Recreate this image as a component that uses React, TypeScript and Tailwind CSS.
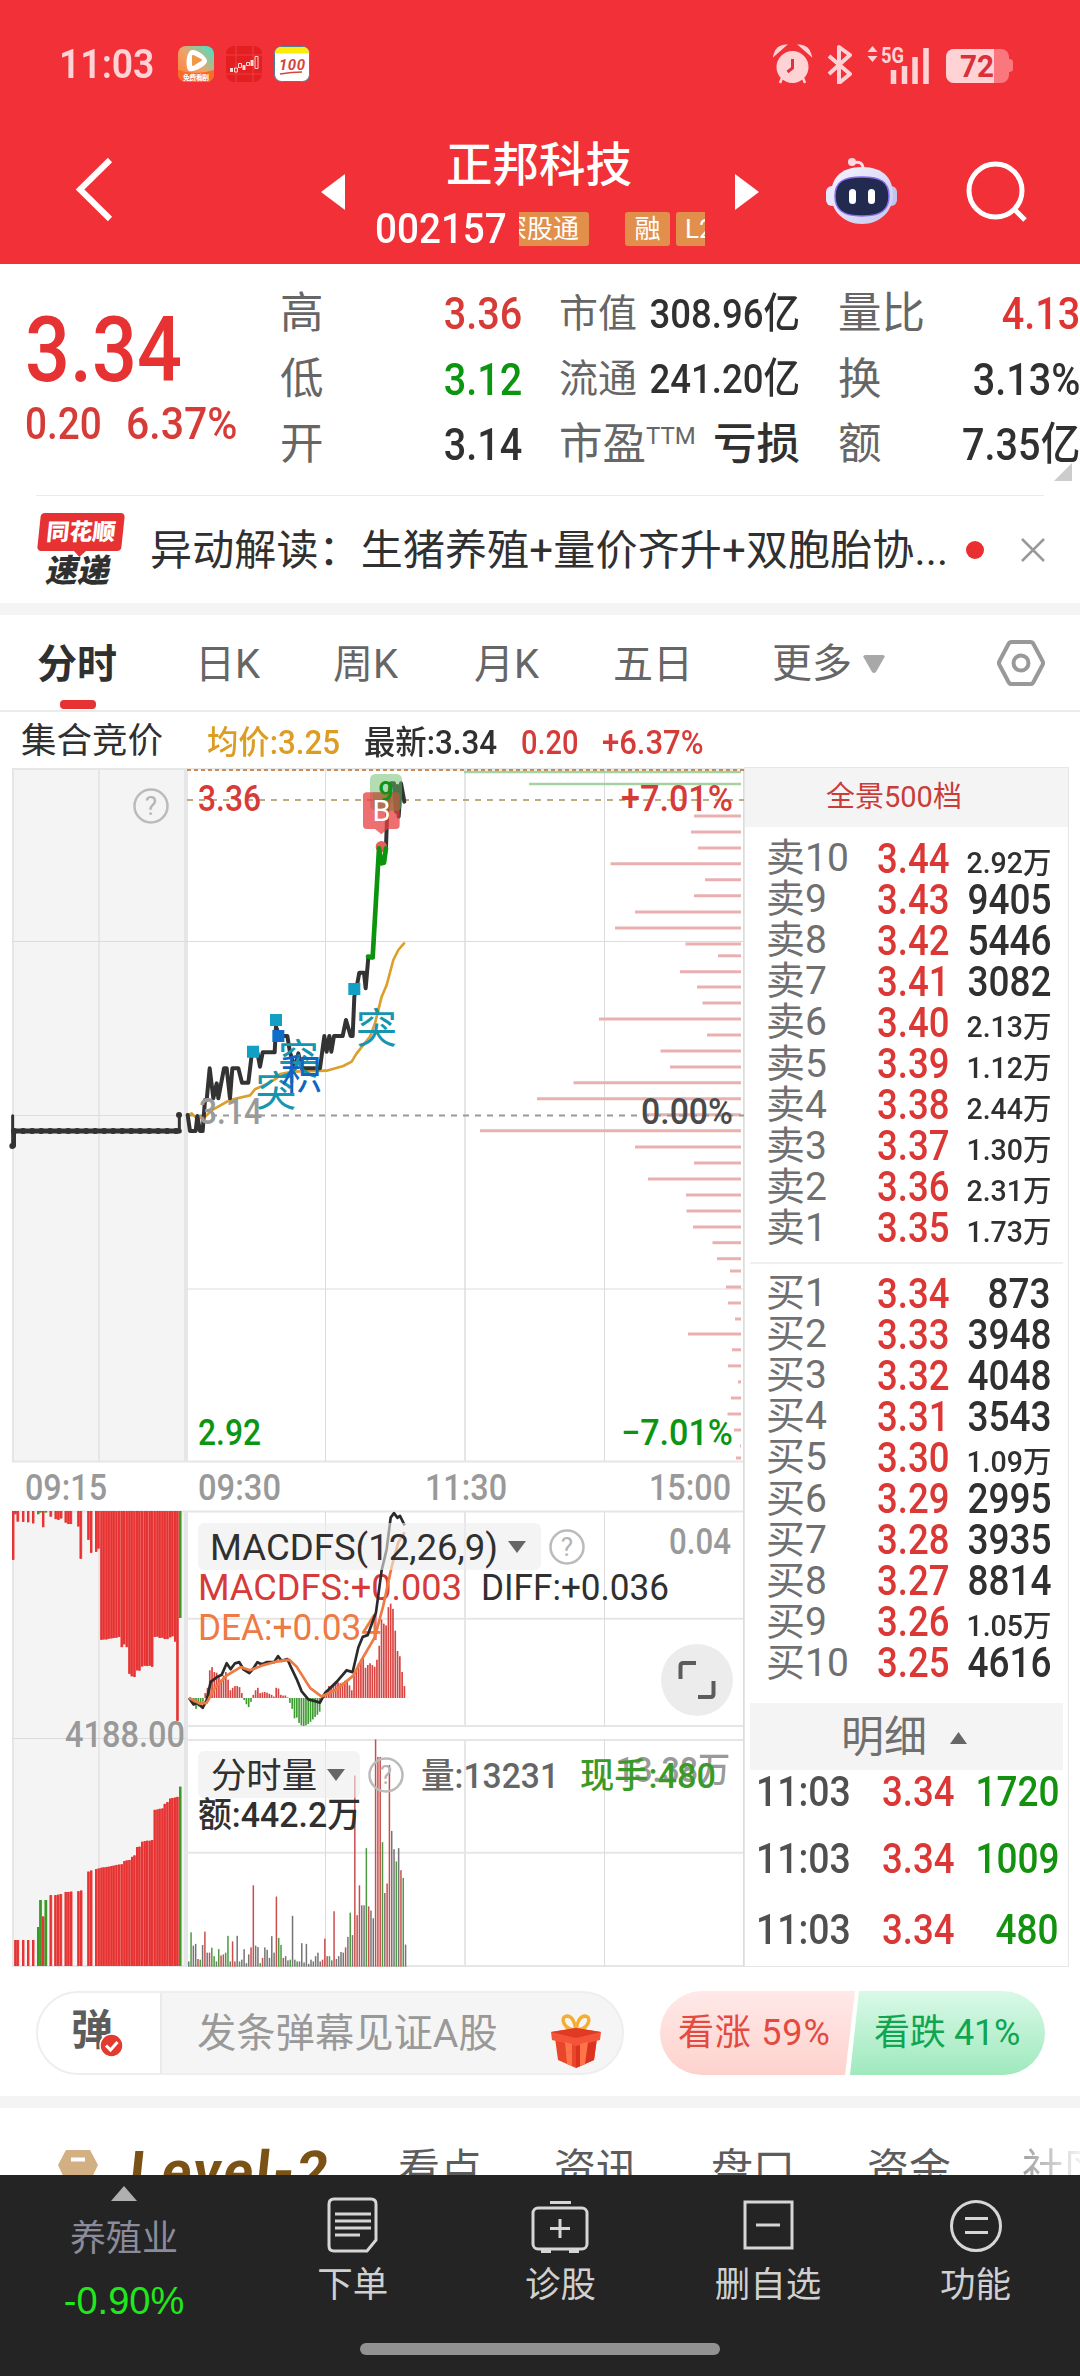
import React from 'react';
import clsx from 'clsx';

type Level = { label: string; price: string; qty: string };

const sells: Level[] = [
  { label: '卖10', price: '3.44', qty: '2.92万' },
  { label: '卖9', price: '3.43', qty: '9405' },
  { label: '卖8', price: '3.42', qty: '5446' },
  { label: '卖7', price: '3.41', qty: '3082' },
  { label: '卖6', price: '3.40', qty: '2.13万' },
  { label: '卖5', price: '3.39', qty: '1.12万' },
  { label: '卖4', price: '3.38', qty: '2.44万' },
  { label: '卖3', price: '3.37', qty: '1.30万' },
  { label: '卖2', price: '3.36', qty: '2.31万' },
  { label: '卖1', price: '3.35', qty: '1.73万' },
];

const buys: Level[] = [
  { label: '买1', price: '3.34', qty: '873' },
  { label: '买2', price: '3.33', qty: '3948' },
  { label: '买3', price: '3.32', qty: '4048' },
  { label: '买4', price: '3.31', qty: '3543' },
  { label: '买5', price: '3.30', qty: '1.09万' },
  { label: '买6', price: '3.29', qty: '2995' },
  { label: '买7', price: '3.28', qty: '3935' },
  { label: '买8', price: '3.27', qty: '8814' },
  { label: '买9', price: '3.26', qty: '1.05万' },
  { label: '买10', price: '3.25', qty: '4616' },
];

const ticks = [
  { time: '11:03', price: '3.34', qty: '1720', h: 'h-[54px]' },
  { time: '11:03', price: '3.34', qty: '1009', h: 'h-[80px]' },
  { time: '11:03', price: '3.34', qty: '480', h: 'h-[62px]' },
];

// [y, left edge] of each turnover line, all end at x=741
const turnover: [number, number][] = [
  [816, 694], [832, 691], [848, 698], [863.7, 610.5], [879.8, 705], [895.8, 694], [911.9, 635], [927.9, 615],
  [944, 685.5], [955.8, 718], [971.8, 680], [986.9, 697], [1003, 702.5], [1019, 599], [1035, 707], [1051, 660.5],
  [1067, 670], [1082.7, 573.5], [1098.7, 537], [1114.8, 643], [1130.8, 480], [1146.9, 635], [1163, 694],
  [1179, 648], [1195, 686], [1211, 686.5], [1227, 693], [1242.7, 712.5], [1258.7, 717], [1271, 730],
  [1287, 726], [1303, 728], [1319, 735], [1334, 688], [1349.8, 732], [1365.9, 728], [1381.9, 738],
  [1398, 731], [1414, 727.5], [1430, 734], [1446, 740], [1458, 736],
];

const RED = '#e63232';
const GREEN = '#3a9a28';
const GREY = '#7d7d7d';

// auction bars: [x, length end, green?], in panel units
const auctionTop: [number, number, number?][] = [
  [36, 370], [43, 240], [50, 261], [66, 262], [81, 263], [96, 266], [111, 240, 1], [118, 235, 1], [126, 277],
  [134, 235, 1], [149, 247], [164, 254], [172, 256], [180, 252], [194, 264], [202, 268], [209, 268], [232, 275],
  [239, 367], [262, 313], [270, 350], [285, 347], [292, 338], [301, 598], [308, 597], [316, 597], [323, 595],
  [331, 594], [338, 593], [346, 592], [354, 590], [362, 619], [369, 611], [377, 619], [385, 695], [392, 702],
  [400, 704], [408, 685], [415, 686], [423, 674], [431, 672], [438, 673], [446, 672], [453, 675], [461, 590],
  [469, 589], [476, 593], [484, 592], [491, 596], [499, 596], [507, 591], [514, 588], [522, 603], [529, 829],
  [537, 536, 1],
];
const auctionBottom: [number, number, number?][] = [
  [43, 1454], [50, 1454], [66, 1454], [81, 1454], [96, 1454], [111, 1417, 1], [118, 1340, 1], [126, 1387],
  [134, 1340, 1], [149, 1326], [163, 1326], [171, 1325], [179, 1323], [194, 1317], [202, 1317], [210, 1316],
  [232, 1315], [240, 1313], [262, 1259], [270, 1256], [285, 1252], [293, 1250], [301, 1248], [308, 1247],
  [316, 1246], [323, 1245], [331, 1243], [338, 1242], [346, 1240], [354, 1239], [362, 1238], [370, 1229],
  [377, 1227], [385, 1226], [393, 1217], [400, 1213], [408, 1189], [415, 1188], [423, 1174], [431, 1172],
  [438, 1171], [446, 1171], [453, 1169], [461, 1083], [469, 1082], [476, 1080], [484, 1079], [491, 1066],
  [499, 1061], [507, 1051], [514, 1049], [522, 1048], [529, 1046], [537, 1017, 1],
];

const macd = [
  764, 775, 785, 795, 788, 782, 775, 750, 735, 685, 676, 690, 692, 705, 712, 700, 690, 712, 742, 735, 730, 730, 733,
  750, 770, 782, 790, 775, 755, 742, 735, 750, 748, 747, 749, 752, 755, 760, 735, 737, 755, 757, 757, 762, 778, 795,
  822, 820, 835, 842, 844, 842, 838, 832, 825, 818, 812, 803, 760, 755, 742, 730, 735, 725, 722, 720, 722, 720, 715,
  712, 728, 742, 700, 685, 665, 655, 650, 678, 670, 665, 670, 675, 655, 615, 540, 552, 557, 505, 495, 510, 572, 630,
  645, 690, 730,
];

const volume = [
  1515, 1432, 1470, 1465, 1508, 1510, 1468, 1430, 1490, 1490, 1476, 1500, 1515, 1480, 1498, 1495, 1490, 1442, 1515,
  1458, 1515, 1442, 1515, 1510, 1480, 1520, 1495, 1475, 1298, 1470, 1474, 1520, 1505, 1475, 1482, 1505, 1443, 1490,
  1330, 1448, 1468, 1505, 1500, 1512, 1510, 1385, 1510, 1515, 1515, 1463, 1518, 1465, 1522, 1510, 1515, 1500, 1490,
  1515, 1510, 1450, 1500, 1500, 1512, 1372, 1508, 1500, 1488, 1490, 1475, 1445, 1376, 1440, 985, 1383, 1298, 1355,
  1355, 1192, 1358, 1370, 1392, 882, 932, 932, 1175, 1320, 1293, 955, 1143, 1195, 1230, 1192, 1255, 1277, 1467,
];
const volumeTone =
  'kgkkrgkrkrggkgrrggkrrkgkkkkrrkkgrkkkkkrggrkkgkkgkkkkkkkkkkrrrgkrkkkkrkgkrrrkkgrkkrrrgkrrkkgkrgk';

const toneColor: Record<string, string> = { r: '#c94f4d', g: '#4c9a42', k: '#757575' };

const pricePath =
  '563,1095 570,1143 587,1143 592,1098 600,1143 608,1143 615,1050 620,1050 629,955 640,1045 650,1000 655,1045 672,955 680,955 690,1045 697,955 715,955 726,998 745,998 756,907 772,907 780,950 788,907 824,907 828,830 838,858 862,858 870,907 885,955 895,910 905,955 960,955 973,858 980,905 988,858 994,905 1002,858 1028,858 1038,810 1052,858 1058,858 1063,740 1072,700 1078,668 1092,668 1097,715 1105,622 1118,622';
const avgPath =
  '565,1095 575,1090 590,1105 615,1100 640,1078 690,1050 750,1036 765,1018 800,1002 830,985 840,972 880,965 980,962 1030,948 1055,935 1070,910 1110,860 1125,820 1145,740 1160,705 1180,630 1195,600 1212,580';
const diffPath =
  '567,764 580,782 592,778 608,792 620,770 632,718 650,705 665,698 680,665 692,682 705,665 718,662 730,682 748,693 760,680 772,662 785,668 800,662 822,662 834,645 845,658 862,653 870,670 890,710 905,745 925,768 945,773 960,777 975,750 1010,718 1040,685 1058,690 1075,620 1088,590 1103,585 1128,520 1145,400 1160,340 1172,250 1182,237 1192,250 1200,245 1214,272';
const deaPath =
  '567,764 600,780 620,778 645,735 680,700 722,676 750,685 790,670 830,660 868,655 890,675 930,735 965,760 1010,740 1060,700 1085,655 1125,590 1150,500 1175,390 1195,320 1214,292';

const Num = ({ children, className }: { children: React.ReactNode; className?: string }) => (
  <span className={clsx('inline-block origin-left font-medium whitespace-nowrap', className)}>
    {children}
  </span>
);

const StatusBar = () => (
  <div className="flex h-[128px] items-center pl-[59px] pr-[67px] text-[#ffd3d6]">
    <Num className="w-[119px] scale-x-[.91] text-[41px] leading-none font-semibold">11:03</Num>
    <svg width="132" height="36" viewBox="0 0 132 36">
      <defs>
        <linearGradient id="video" x1="0" y1="1" x2="1" y2="0">
          <stop offset="0" stopColor="#ff7a2c" />
          <stop offset=".5" stopColor="#efa269" />
          <stop offset="1" stopColor="#38e8ce" />
        </linearGradient>
      </defs>
      <rect width="36" height="36" rx="8" fill="url(#video)" />
      <path d="M0 24q18 6 36 0v4a8 8 0 0 1-8 8H8a8 8 0 0 1-8-8z" fill="#fb6b24" />
      <path d="M14 4c-6 1-7 18-3 21 4 2 18-5 18-10C29 10 18 3 14 4z" fill="#fff" />
      <path d="M15 10v9l8-5z" fill="#ee9a4a" stroke="#ee9a4a" strokeWidth="2" strokeLinejoin="round" />
      <text x="18" y="34" fontSize="7" fontWeight="700" fill="#fff" textAnchor="middle" textLength="26">免费看剧</text>
      <rect x="48" width="36" height="36" rx="8" fill="#e31f22" />
      <path d="M58 0v36M75 0v36M48 9h36M48 28h36" stroke="#ec3f40" strokeWidth="1" />
      <path d="M53.500 22v4M66 19v5M74 14v6" stroke="#ffd9d6" strokeWidth="3" />
      <path d="M56.500 22h3v4h-3zM60.500 17.500h3v4h-3zM68.500 16.500h3v3h-3zM77 10.500h3v12h-3z" stroke="#ffd9d6" strokeWidth="1" fill="none" />
      <rect x="96.500" y=".5" width="35" height="35" rx="7" fill="#fff" stroke="#4e7d96" />
      <path d="M97 7.500V7a6 6 0 0 1 6-6h22a6 6 0 0 1 6 6v.5z" fill="#fbea0b" />
      <text x="114" y="24" fontSize="15" fontWeight="700" fontStyle="italic" fill="#d5453b" textAnchor="middle" textLength="26">100</text>
      <path d="M102 28q12-2 22-2" stroke="#d5453b" strokeWidth="1.500" fill="none" />
    </svg>
    <svg className="ml-auto" width="240" height="40" viewBox="773 44 240 40">
      <circle cx="792.500" cy="67" r="16" fill="#ffd3d6" />
      <path d="M775 54q2-7 9-8zM810 54q-2-7-9-8zM782 78l-2 5M803 78l2 5" fill="#ffd3d6" stroke="#ffd3d6" strokeWidth="2.500" />
      <path d="M792.500 59v9l-5 4" stroke="#dc3340" strokeWidth="3" fill="none" />
      <path d="M829 56l21 18-11 9V47l11 8-21 19" stroke="#ffd3d6" strokeWidth="4" fill="none" strokeLinejoin="round" />
      <path d="M867.500 52h10l-5-6zM867.500 56h10l-5 6z" fill="#ffd3d6" />
      <text x="881" y="62.500" fontSize="22" fontWeight="700" fill="#ffd3d6" textLength="23" lengthAdjust="spacingAndGlyphs">5G</text>
      <path d="M893.500 70v15M904.500 66v18M915 57v27M926 48v36" stroke="#ffd3d6" strokeWidth="5.500" />
      <rect x="946" y="49" width="63" height="34" rx="8" fill="#fa777d" />
      <path d="M1009 59q4 0 4 3v7q0 3-4 3z" fill="#fa777d" />
      <path d="M994 49h-40a8 8 0 0 0-8 8v18a8 8 0 0 0 8 8h40z" fill="#ffd3d6" />
      <text x="960" y="77" fontSize="32" fontWeight="700" fill="#d9303a" textLength="34" lengthAdjust="spacingAndGlyphs">72</text>
    </svg>
  </div>
);

const Robot = () => (
  <svg width="74" height="70" viewBox="0 0 74 70">
    <defs>
      <linearGradient id="shell" x2="1" y2="1">
        <stop offset="0" stopColor="#f6f4ff" />
        <stop offset="1" stopColor="#c6c8ee" />
      </linearGradient>
    </defs>
    <path d="M28 9q10-3 10 6" stroke="#f3dcea" strokeWidth="3" fill="none" />
    <circle cx="27" cy="8" r="4" fill="#fbd9e2" />
    <rect x="1" y="32" width="12" height="20" rx="6" fill="#e9e8fa" />
    <rect x="60" y="32" width="12" height="20" rx="6" fill="#c2c4ee" />
    <path d="M37 13c22 0 31 12 31 28S55 70 37 70 6 57 6 41s9-28 31-28z" fill="url(#shell)" />
    <path d="M37 23c19 0 27 5 27 19S56 62 37 62 10 56 10 42s8-19 27-19z" fill="#222a50" stroke="#8a6cf0" strokeWidth="1.500" />
    <rect x="24" y="35" width="7" height="15" rx="3.500" fill="#fff" />
    <rect x="43" y="35" width="7" height="15" rx="3.500" fill="#fff" />
  </svg>
);

const Header = () => (
  <header className="h-[264px] bg-[#f23038] text-white">
    <StatusBar />
    <div className="flex h-[136px]">
      <svg className="ml-[74px] mt-[28px]" width="44" height="68" viewBox="0 0 44 68">
        <path d="M36 4L6 33.500 36 63" stroke="#fff" strokeWidth="6" fill="none" />
      </svg>
      <svg className="ml-[203px] mt-[46px]" width="24" height="36" viewBox="0 0 24 36">
        <path d="M24 0v36L0 18z" fill="#fff" />
      </svg>
      <div className="ml-[30px] w-[335px] pt-[6px]">
        <h1 className="pl-[71px] text-[46.5px] leading-[62px] font-medium">正邦科技</h1>
        <div className="mt-[12px] flex h-[42px] items-center">
          <Num className="w-[144px] scale-x-[.92] text-[42px] leading-none">002157</Num>
          <div className="-mt-px flex w-[186px] gap-[6px] overflow-hidden text-[26px] leading-[34px]">
            <div className="flex w-[70px] shrink-0 justify-end overflow-hidden rounded-r-[3px] bg-[#e28f4c] pr-[10px] whitespace-nowrap">
              深股通
            </div>
            <div className="ml-[30px] w-[45px] shrink-0 rounded-[3px] bg-[#e28f4c] text-center">融</div>
            <div className="w-[45px] shrink-0 rounded-[3px] bg-[#e28f4c] pl-[9px]">L2</div>
          </div>
        </div>
      </div>
      <svg className="ml-[25px] mt-[46px]" width="24" height="36" viewBox="0 0 24 36">
        <path d="M0 0v36l24-18z" fill="#fff" />
      </svg>
      <div className="ml-[66px] mt-[26px]">
        <Robot />
      </div>
      <svg className="ml-[64px] mt-[30px]" width="68" height="70" viewBox="962 158 68 70">
        <circle cx="994.500" cy="190.500" r="26.500" stroke="#fff" strokeWidth="5" fill="none" />
        <path d="M1013 209l11 11" stroke="#fff" strokeWidth="5" />
      </svg>
    </div>
  </header>
);

const Quote = ({ label, value, small, tone }: { label: React.ReactNode; value: string; small?: boolean; tone?: string }) => (
  <div className="flex h-[65.5px] items-center justify-between">
    <span className={clsx('whitespace-nowrap text-[#666]', small ? 'text-[39px]' : 'text-[43.5px]')}>{label}</span>
    <Num className={clsx('origin-right scale-x-[.88]', small ? '-ml-8 text-[41.5px]' : 'text-[45px]', tone ?? 'text-[#303030]')}>
      {value}
    </Num>
  </div>
);

const QuotePanel = () => (
  <section className="flex h-[231px] pt-[17px]">
    <div className="w-[280px] shrink-0 pl-[25px] text-[#e63232]">
      <Num className="mt-[25px] block h-[88px] scale-x-[.87] text-[91px] leading-[88px]">3.34</Num>
      <div className="mt-[3px] flex text-[45px] leading-[54px] text-[#d63b38]">
        <Num className="w-[101px] scale-x-[.86]">0.20</Num>
        <Num className="w-[110px] scale-x-[.91]">6.37%</Num>
      </div>
    </div>
    <div className="w-[242px] shrink-0">
      <Quote label="高" value="3.36" tone="text-[#d63b38]" />
      <Quote label="低" value="3.12" tone="text-[#0b9510]" />
      <Quote label="开" value="3.14" />
    </div>
    <div className="ml-[37px] w-[241px] shrink-0">
      <Quote small label="市值" value="308.96亿" />
      <Quote small label="流通" value="241.20亿" />
      <div className="flex h-[65.5px] items-center justify-between text-[43.5px]">
        <span className="flex whitespace-nowrap text-[#666]">
          市盈<span className="mt-[9px] text-[24px] leading-[30px]">TTM</span>
        </span>
        <span className="-ml-2 font-medium whitespace-nowrap text-[#303030]">亏损</span>
      </div>
    </div>
    <div className="relative ml-[38px] w-[242px] shrink-0">
      <Quote label="量比" value="4.13" tone="text-[#e03433]" />
      <Quote label="换" value="3.13%" />
      <Quote label="额" value="7.35亿" />
      <svg className="absolute top-[182px] right-[8px]" width="18" height="18" viewBox="0 0 18 18">
        <path d="M18 0v18H0z" fill="#ccc" />
      </svg>
    </div>
  </section>
);

const News = () => (
  <section className="mx-[36px] flex h-[108px] items-center border-t border-[#ebebeb] text-[#303030]">
    <div className="w-[114px] shrink-0">
      <div className="relative mx-[3px] flex h-[38px] w-[84px] -skew-x-6 items-center justify-center rounded-[4px] bg-[#e63232] text-[23px] leading-none font-black whitespace-nowrap text-white">
        同花顺
        <svg className="absolute top-[37px] left-[36px]" width="14" height="7" viewBox="0 0 14 7">
          <path d="M0 0h14L7 7z" fill="#e63232" />
        </svg>
      </div>
      <div className="mt-[4px] ml-[11px] -skew-x-12 text-[32px] leading-[32px] font-black">速递</div>
    </div>
    <span className="w-[798px] pt-[2px] text-[42px] tracking-[0.15px] whitespace-nowrap">异动解读：生猪养殖+量价齐升+双胞胎协...</span>
    <span className="ml-[18px] size-[18px] shrink-0 rounded-full bg-[#e92f30]" />
    <svg className="ml-[37px] shrink-0" width="24" height="24" viewBox="0 0 24 24">
      <path d="M1 1l22 22M23 1L1 23" stroke="#999" strokeWidth="2.500" />
    </svg>
  </section>
);

const PeriodTabs = () => (
  <nav className="flex h-[97px] items-center border-b-2 border-[#ebebeb] text-[40px] whitespace-nowrap text-[#666]">
    <div className="relative ml-[37px] w-[158px] pt-[5px] font-bold text-[#303030]">
      分时
      <span className="absolute top-[70px] left-[23px] h-[9px] w-[36px] rounded-[4px] bg-[#e63232]" />
    </div>
    <div className="w-[138px] pt-[5px]">日K</div>
    <div className="w-[141px] pt-[5px]">周K</div>
    <div className="w-[139px] pt-[5px]">月K</div>
    <div className="w-[159px] pt-[5px]">五日</div>
    <div className="flex w-[225px] items-center pt-[3px]">
      更多
      <svg className="ml-[11px]" width="22" height="19" viewBox="0 0 22 19">
        <path d="M2 0h18q3 1 1 3l-8 14q-2 2-4 0L1 3q-2-2 1-3z" fill="#a8a8a8" />
      </svg>
    </div>
    <svg width="48" height="46" viewBox="0 0 48 46">
      <path d="M14.500 2h19q2 0 3 2l9 17q1 2 0 4l-9 17q-1 2-3 2h-19q-2 0-3-2l-9-17q-1-2 0-4l9-17q1-2 3-2z" stroke="#999" strokeWidth="4" fill="none" />
      <circle cx="24" cy="23" r="7.500" stroke="#999" strokeWidth="4" fill="none" />
    </svg>
  </nav>
);

const InfoLine = () => (
  <div className="flex h-[54px] items-center pt-[6px] text-[33px] leading-none whitespace-nowrap text-[#303030]">
    <span className="ml-[21px] w-[186px] text-[35.5px]">集合竞价</span>
    <Num className="w-[157px] scale-x-[.95] text-[#dc9d22]">均价:3.25</Num>
    <Num className="w-[157px] scale-x-[.95]">最新:3.34</Num>
    <Num className="w-[81px] scale-x-[.88] text-[#d63b38]">0.20</Num>
    <Num className="scale-x-[.94] text-[#d63b38]">+6.37%</Num>
  </div>
);

const Help = ({ x, y }: { x: number; y: number }) => (
  <g>
    <circle cx={x} cy={y} r="16.500" stroke="#bbb" strokeWidth="2.500" fill="none" />
    <text x={x} y={y + 9} fontSize="26" fill="#b4b4b4" textAnchor="middle">?</text>
  </g>
);

type LabelProps = { x: number; y: number; w: number; fill: string; size?: number; weight?: number; children: string };

const Label = ({ x, y, w, fill, size = 36, weight = 500, children }: LabelProps) => (
  <text x={x} y={y} textLength={w} lengthAdjust="spacingAndGlyphs" fontSize={size} fontWeight={weight} fill={fill}>
    {children}
  </text>
);

const Charts = () => (
  <svg className="shrink-0" width="744" height="1202" viewBox="0 766 744 1202">
    {/* grid */}
    <rect x="12" y="769" width="174" height="692" fill="#f4f4f4" />
    <rect x="12" y="1511" width="174" height="455" fill="#f4f4f4" />
    <g stroke="#e6e6e6" strokeWidth="2" fill="none">
      <path d="M12 769H744M12 1461.500H744M12 1511.500H744M187 1618.700H744M187 1726H744M187 1740H744M187 1852.700H744M12 1966H744" />
      <path d="M13 769V1461M99 769V1461M13 1511V1966M99 1511V1966M465 769V1461M465 1511V1726M465 1740V1966" />
      <path d="M186 769V1461M186 1511V1966" strokeWidth="4" />
    </g>
    <path
      d="M12 941.500H744M12 1115.500H187M187 1289H744M12 1738.500H186M325.500 769V1461M604.500 769V1461M325.500 1511V1727M604.500 1511V1727M325.500 1739V1966M604.500 1739V1966M743.500 769V1966"
      stroke="#dcdcdc"
      fill="none"
    />
    {/* turnover by price */}
    <path d="M464 772H741M529 784H741" stroke="#a3d3a3" strokeWidth="2.500" />
    {turnover.map(([y, x]) => (
      <path key={y} d={`M${x} ${y}H741`} stroke="#eab0b0" strokeWidth="3" />
    ))}
    <path d="M187 770H744" stroke="#c98d55" strokeWidth="2" strokeDasharray="4 3" />
    <path d="M187 800H744" stroke="#bdab84" strokeWidth="2" strokeDasharray="6 6" />
    <path d="M187 1115.500H744" stroke="#9a9a9a" strokeWidth="2" strokeDasharray="6 6" />
    <Help x={151} y={806} />

    <Label x={198} y={811} w={63} fill="#d63b38">3.36</Label>
    <Label x={621} y={811} w={112} fill="#d63b38">+7.01%</Label>
    <Label x={641} y={1123.5} w={92} fill="#4a4a4a">0.00%</Label>
    <Label x={198} y={1445} w={63} fill="#0b9510">2.92</Label>
    <Label x={621} y={1445} w={112} fill="#0b9510">−7.01%</Label>

    {/* price and average, drawn at 3x */}
    <g transform="translate(0 750) scale(.33333)" fill="none" strokeLinejoin="round" strokeLinecap="round">
      <path d="M38 1097V1188M538 1097V1145" stroke="#333" strokeWidth="9" />
      <path d="M43 1143V1188" stroke="#333" strokeWidth="10" />
      <path d="M42 1143H538" stroke="#333" strokeWidth="15" />
      <path d="M42 1143H538" stroke="#333" strokeWidth="18" strokeDasharray="1 26" />
      <circle cx="37" cy="1188" r="9" fill="#333" />
      <circle cx="537" cy="1095" r="9" fill="#333" />
      <polyline points={avgPath} stroke="#dc9f2c" strokeWidth="8" />
      <polyline points={pricePath} stroke="#333" strokeWidth="12" />
      <polyline points="1158,290 1162,180 1172,100 1182,100 1188,185 1192,108 1196,200 1203,100 1213,155" stroke="#333" strokeWidth="12" />
      <circle cx="1144" cy="290" r="17" fill="#e4605f" />
      <polyline points="1104,620 1118,622 1137,295 1145,340 1152,338 1158,295" stroke="#0c950c" strokeWidth="14" />
      <rect x="1110" y="72" width="96" height="110" rx="16" fill="#66bb66" fillOpacity=".5" />
      <path d="M1100 127h88q11 0 11 11v88q0 11-11 11h-25l-19 16-19-16h-25q-11 0-11-11v-88q0-11 11-11z" fill="#e83f3f" fillOpacity=".75" />
      <path d="M1119 127h80v55h-64q-16 0-16-16z" fill="#5f8a3c" fillOpacity=".35" />
      <path d="M741 887h36v36h-36zM810 792h36v36h-36zM1045 699h36v36h-36z" fill="#119fc3" />
      <path d="M817 840h36v36h-36z" fill="#0d6dc8" />
    </g>
    <text x="386" y="801" fontSize="27" fontWeight="500" fill="#0b9510" textAnchor="middle">9</text>
    <text x="381.500" y="821" fontSize="29" fontWeight="400" fill="#fff" textAnchor="middle">B</text>
    <Label x={199} y={1124} w={63} fill="#9a9a9a">3.14</Label>
    <g fontSize="41" fill="#1595b0">
      <text x="255.500" y="1106">突</text>
      <text x="278" y="1074">突</text>
      <text x="356" y="1043">突</text>
      <text x="281" y="1089" fill="#1264c0">积</text>
    </g>

    <Label x={25} y={1500} w={82} fill="#999">09:15</Label>
    <Label x={198} y={1500} w={83} fill="#999">09:30</Label>
    <Label x={425} y={1500} w={82} fill="#999">11:30</Label>
    <Label x={649} y={1500} w={82} fill="#999">15:00</Label>

    {/* indicator text under the curves */}
    <Label x={198} y={1600} w={264} fill="#d63b38" weight={400}>MACDFS:+0.003</Label>
    <Label x={481} y={1600} w={188} fill="#303030" weight={400}>DIFF:+0.036</Label>
    <Label x={198} y={1640} w={183} fill="#ee7a44" weight={400}>DEA:+0.034</Label>
    <Label x={669} y={1554} w={62} fill="#999">0.04</Label>
    <Label x={616} y={1782} w={114} fill="#999" size={35}>13.38万</Label>

    <g transform="translate(0 1430) scale(.33333 .35077)">
      {auctionTop.map(([x, y, up]) => (
        <g key={x}>
          <rect x={x} y="231" width={7.6} height={y - 231} fill={up ? GREEN : '#e8524e'} />
          <rect x={x} y="231" width="5.500" height={y - 231} fill={up ? GREEN : RED} />
        </g>
      ))}
      {auctionBottom.map(([x, y, up]) => (
        <g key={x}>
          <rect x={x} y={y} width={7.6} height={1528 - y} fill={up ? GREEN : '#e8524e'} />
          <rect x={x} y={y} width="5.500" height={1528 - y} fill={up ? GREEN : RED} />
        </g>
      ))}
    </g>
    <g transform="translate(0 1430) scale(.33333 .35077)" fill="none" strokeLinejoin="round">
      {macd.map((y, i) => (
        <rect key={i} x={565 + i * 6.87} y={Math.min(y, 764)} width="5" height={Math.abs(764 - y)} fill={y < 764 ? '#d94440' : '#3f9c32'} />
      ))}
      {volume.map((y, i) => (
        <rect key={i} x={564 + i * 6.92} y={y} width="4.500" height={1530 - y} fill={toneColor[volumeTone[i]] ?? GREY} />
      ))}
      <polyline points={diffPath} stroke="#2b2b2b" strokeWidth="8" />
      <polyline points={deaPath} stroke="#ee7a44" strokeWidth="8" />
    </g>
    <Label x={65} y={1747} w={120} fill="#999">4188.00</Label>

    <rect x="198" y="1523" width="343" height="47" rx="6" fill="#ededed" fillOpacity=".6" />
    <Label x={210} y={1560} w={288} fill="#303030" weight={400}>MACDFS(12,26,9)</Label>
    <path d="M508 1541h18l-9 12z" fill="#666" />
    <Help x={567} y={1547} />
    <rect x="198" y="1751" width="162" height="47" rx="6" fill="#ededed" fillOpacity=".6" />
    <Label x={211} y={1788} w={106} fill="#303030" size={35} weight={400}>分时量</Label>
    <path d="M327 1769h18l-9 12z" fill="#666" />
    <Help x={386} y={1775} />
    <Label x={421} y={1788} w={138} fill="#666" size={35}>量:13231</Label>
    <Label x={580} y={1788} w={136} fill="#3a9a28" size={35}>现手:480</Label>
    <Label x={198} y={1827} w={163} fill="#303030" size={35}>额:442.2万</Label>

    <circle cx="697" cy="1680" r="36" fill="#ececec" />
    <path d="M680.500 1679v-13q0-3 3-3h12.500M713.500 1681v13q0 3-3 3H698" stroke="#5c5c5c" strokeWidth="4" fill="none" />
  </svg>
);

const BookRow = ({ label, price, qty }: Level) => (
  <div className="flex h-[41.1px] items-center text-[42px] leading-none">
    <span className="w-[111px] text-[39px] whitespace-nowrap text-[#707070]">{label}</span>
    <Num className="w-[72px] scale-x-[.87] text-[#db3735]">{price}</Num>
    <span className="ml-auto">
      <Num
        className={clsx(
          'origin-right text-[#303030]',
          qty.endsWith('万') ? 'mt-[4px] scale-x-[.95] text-[30px]' : 'scale-x-[.88]',
        )}
      >
        {qty}
      </Num>
    </span>
  </div>
);

const OrderBook = () => (
  <aside className="mt-[1px] h-[1200px] w-[325px] border border-[#e6e6e6]">
    <div className="flex h-[59px] items-center bg-[#f4f4f4] pt-[1px] pl-[81px] text-[29px] text-[#c93c38]">全景500档</div>
    <div className="h-[435px] pt-[11px] pr-[17px] pl-[21px]">
      {sells.map((l) => <BookRow key={l.label} {...l} />)}
    </div>
    <div className="mx-[5px] border-t-2 border-[#f0f0f0]" />
    <div className="h-[439px] pt-[9px] pr-[17px] pl-[21px]">
      {buys.map((l) => <BookRow key={l.label} {...l} />)}
    </div>
    <div className="mx-[5px] flex h-[67px] items-center bg-[#f4f4f4] pt-[2px] pl-[91px] text-[43px] text-[#707070]">
      明细
      <svg className="ml-[23px]" width="17" height="12" viewBox="0 0 17 12">
        <path d="M0 12h17L8.500 0z" fill="#666" />
      </svg>
    </div>
    <div className="-mt-[5px] pr-[9px] pl-[11px]">
      {ticks.map((t) => (
        <div key={t.qty} className={clsx('flex items-center text-[42px] leading-none', t.h)}>
          <Num className="w-[126px] scale-x-[.89] text-[#505050]">{t.time}</Num>
          <Num className="w-[72px] scale-x-[.87] text-[#db3735]">{t.price}</Num>
          <Num className="ml-auto origin-right scale-x-[.88] text-[#12920f]">{t.qty}</Num>
        </div>
      ))}
    </div>
  </aside>
);

const Gift = () => (
  <svg className="ml-auto" width="52" height="54" viewBox="0 0 52 54">
    <path d="M26 16C14 16 9 3 17 2c6 0 8 8 9 14 1-6 3-14 9-14 8 1 3 14-9 14z" stroke="#f6ad34" strokeWidth="3.500" fill="none" />
    <path d="M5 24l21 6 21-6-3 22-18 8-18-8z" fill="#e8452b" />
    <path d="M26 30l21-6-3 22-18 8z" fill="#dc3320" />
    <path d="M1 18l25-4 25 4-1 8-24 6-24-6z" fill="#f4553a" />
    <path d="M1 18l25-4 25 4-25 6z" fill="#e03a24" />
    <path d="M15 28l7 2v22l-5-2zM38 28l-8 2v22l5-2z" fill="#ff7448" />
  </svg>
);

const Danmaku = () => (
  <section className="flex h-[128px] items-center pt-[2px]">
    <div className="ml-[36px] flex h-[84px] w-[588px] items-center overflow-hidden rounded-full border-2 border-[#eee] bg-[#f5f5f5]">
      <div className="relative flex h-full w-[124px] shrink-0 items-center border-r-2 border-[#eaeaea] bg-white pb-[6px] pl-[33px] text-[42px] font-bold text-[#5c5c5c]">
        弹
        <svg className="absolute top-[40px] left-[61px]" width="25" height="25" viewBox="0 0 25 25">
          <circle cx="12.500" cy="12.500" r="11.500" fill="#e33b30" stroke="#fff" strokeWidth="1.500" />
          <path d="M7 12.500l4.500 4.500 7-8" stroke="#fff" strokeWidth="3" fill="none" />
        </svg>
      </div>
      <span className="ml-[35px] pt-[3px] text-[39.3px] whitespace-nowrap text-[#999]">发条弹幕见证A股</span>
      <div className="mt-[16px] mr-[20px] ml-auto">
        <Gift />
      </div>
    </div>
    <div className="relative ml-[36px] flex h-[84px] w-[385px] overflow-hidden rounded-full text-[36px] whitespace-nowrap">
      <svg className="absolute inset-0" width="385" height="84" viewBox="0 0 385 84">
        <defs>
          <linearGradient id="up" x2="0" y2="1">
            <stop offset="0" stopColor="#ffe9e8" />
            <stop offset="1" stopColor="#fdd2cd" />
          </linearGradient>
          <linearGradient id="down" x2="0" y2="1">
            <stop offset="0" stopColor="#d9f9e7" />
            <stop offset="1" stopColor="#9fe9bd" />
          </linearGradient>
        </defs>
        <path d="M0 0h195l-10 84H0z" fill="url(#up)" />
        <path d="M199 0h186v84H190z" fill="url(#down)" />
      </svg>
      <span className="relative w-[197px] pl-[18px] leading-[85px] tracking-[0.8px] text-[#e34a40]">看涨 59%</span>
      <span className="relative pl-[17px] leading-[85px] tracking-[-0.3px] text-[#10a551]">看跌 41%</span>
    </div>
  </section>
);

const SectionTabs = () => (
  <nav className="flex h-[67px] overflow-hidden pt-[35px] text-[42px] leading-[54px] whitespace-nowrap text-[#5c5c5c]">
    <svg className="mt-[7px] ml-[57px] shrink-0" width="42" height="34" viewBox="0 0 42 34">
      <path d="M9 0h24l8 15-9 19H10L1 15z" fill="#d3b083" />
      <path d="M14 9.500h14" stroke="#fff" strokeWidth="4" />
    </svg>
    <span className="ml-[32px] w-[267px] shrink-0 -skew-x-6 text-[55px] leading-[56px] font-bold tracking-[2.5px] text-[#7b5216]">
      Level-2
    </span>
    <span className="w-[156px] shrink-0">看点</span>
    <span className="w-[157px] shrink-0">资讯</span>
    <span className="w-[156px] shrink-0">盘口</span>
    <span className="w-[155px] shrink-0">资金</span>
    <span className="shrink-0 bg-gradient-to-r from-[#a0a0a0] to-[#fff] to-80% bg-clip-text text-transparent">社区</span>
  </nav>
);

const NavItem = ({ label, children }: { label: string; children: React.ReactNode }) => (
  <div className="flex w-[207.6px] flex-col items-center">
    <svg width="60" height="60" viewBox="0 0 60 60" stroke="#d6d6d6" strokeWidth="3" fill="none">
      {children}
    </svg>
    <span className="mt-[4px] text-[35.5px] leading-[52px] text-[#d0d0d0]">{label}</span>
  </div>
);

const BottomBar = () => (
  <footer className="h-[201px] bg-[#242424]">
    <div className="flex h-[168px]">
      <div className="flex w-[248px] flex-col items-center pt-[11px]">
        <svg width="26" height="15" viewBox="0 0 26 15">
          <path d="M0 15h26L13 0z" fill="#b0b0b0" />
        </svg>
        <span className="mt-[12px] text-[36px] leading-[52px] text-[#8b8b9b]">养殖业</span>
        <span className="mt-[13px] font-['Liberation_Sans'] text-[38px] leading-[46px] text-[#20e81d]">-0.90%</span>
      </div>
      <div className="flex pt-[20px] pl-[1px]">
        <NavItem label="下单">
          <path d="M11 4h37q5 0 5 5v36l-9 11H11q-5 0-5-5V9q0-5 5-5z" />
          <path d="M12 19h36M12 26h36M12 33h36M12 40h25" />
        </NavItem>
        <NavItem label="诊股">
          <rect x="3" y="13" width="54" height="41" rx="5" />
          <path d="M20 7.500h21M30 24v19M20 33.500h20M11 56.500h10M39 56.500h10" />
        </NavItem>
        <NavItem label="删自选">
          <rect x="7" y="7" width="47" height="46" />
          <path d="M18 30h24" />
        </NavItem>
        <NavItem label="功能">
          <circle cx="30" cy="31" r="24.500" />
          <path d="M19 23.500h23M19 37.500h23" />
        </NavItem>
      </div>
    </div>
    <div className="mx-auto h-[12px] w-[360px] rounded-full bg-[#929292]" />
  </footer>
);

export default function App() {
  return (
    <div className="h-[2376px] w-[1080px] overflow-hidden bg-white font-['Roboto','Noto_Sans_CJK_SC',sans-serif]">
      <Header />
      <QuotePanel />
      <News />
      <div className="h-[12px] bg-[#f4f4f4]" />
      <PeriodTabs />
      <InfoLine />
      <div className="flex h-[1202px]">
        <Charts />
        <OrderBook />
      </div>
      <Danmaku />
      <div className="h-[12px] bg-[#f4f4f4]" />
      <SectionTabs />
      <BottomBar />
    </div>
  );
}
